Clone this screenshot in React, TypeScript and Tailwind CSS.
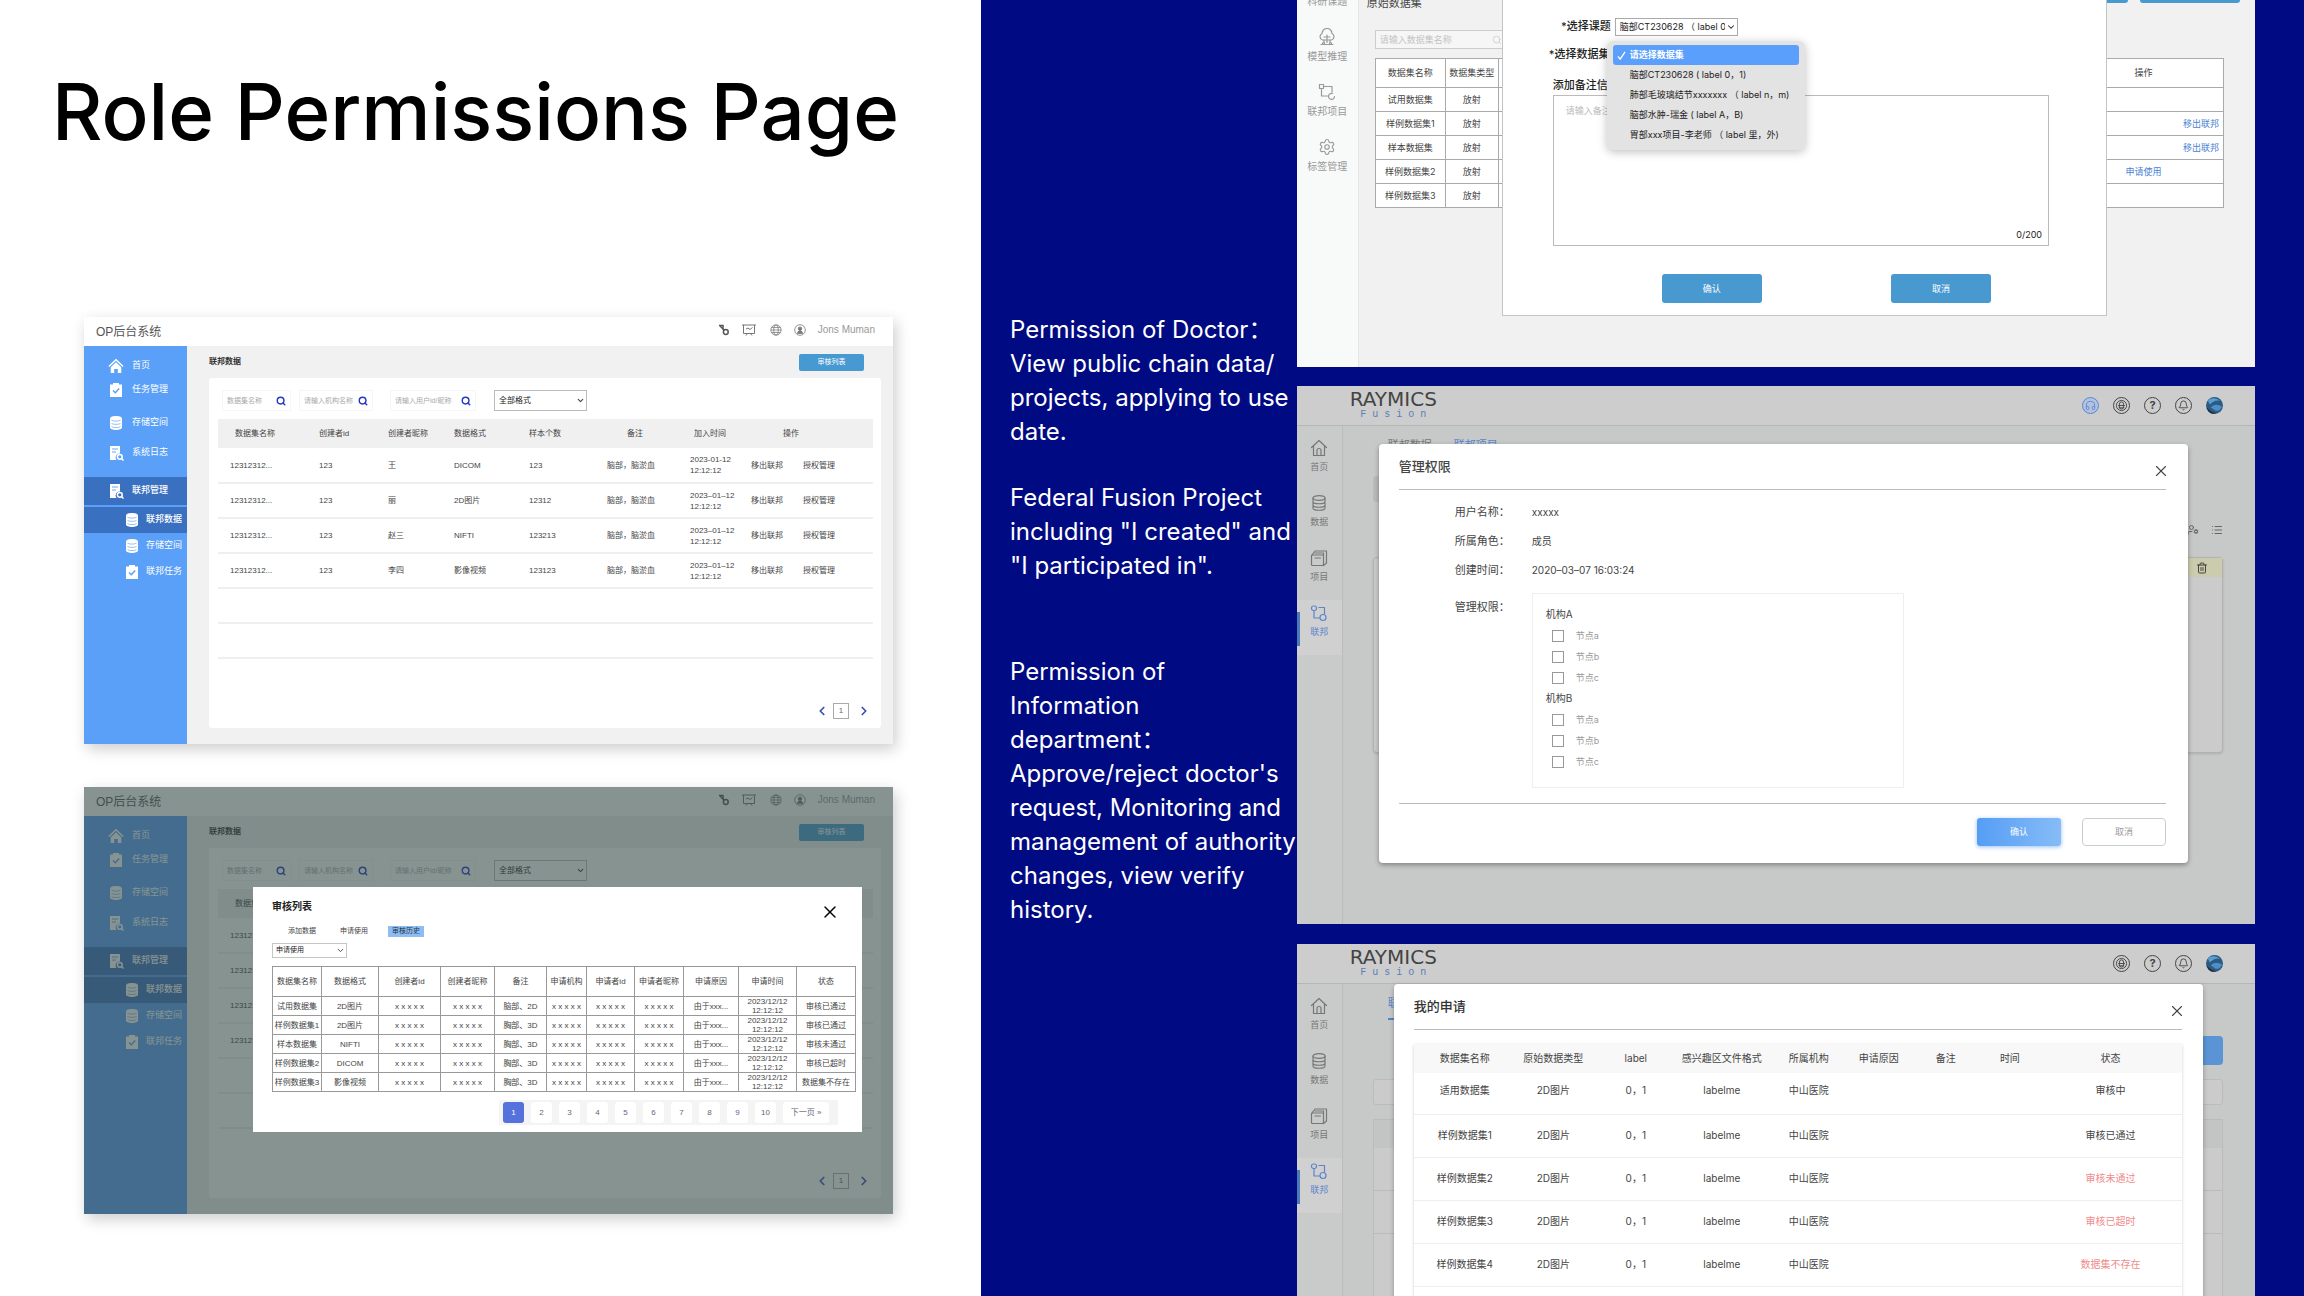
import React, { useId } from 'react';
import { Bell, ChevronDown, ChevronLeft, ChevronRight, Headphones, List, Search, Settings, Trash2, UserCog, X } from 'lucide-react';

const opMenu = [
    { label: '首页', icon: 'home' },
    { label: '任务管理', icon: 'task' },
];
const opMenuTall = [
    { label: '存储空间', icon: 'disk' },
    { label: '系统日志', icon: 'log' },
];
const opSubMenu = [
    { label: '联邦数据', icon: 'disk', active: true },
    { label: '存储空间', icon: 'disk', active: false },
    { label: '联邦任务', icon: 'task', active: false },
];

const opRows = [
    { name: '12312312...', id: '123', nick: '王', format: 'DICOM', count: '123', date: '2023-01-12' },
    { name: '12312312...', id: '123', nick: '丽', format: '2D图片', count: '12312', date: '2023–01–12' },
    { name: '12312312...', id: '123', nick: '赵三', format: 'NIFTI', count: '123213', date: '2023–01–12' },
    { name: '12312312...', id: '123', nick: '李四', format: '影像视频', count: '123123', date: '2023–01–12' },
];

const reviewHead = ['数据集名称', '数据格式', '创建者id', '创建者昵称', '备注', '申请机构', '申请者id', '申请者昵称', '申请原因', '申请时间', '状态'];
const reviewRows = [
    ['试用数据集', '2D图片', '脑部、2D', '审核已通过'],
    ['样例数据集1', '2D图片', '胸部、3D', '审核已通过'],
    ['样本数据集', 'NIFTI', '胸部、3D', '审核未通过'],
    ['样例数据集2', 'DICOM', '胸部、3D', '审核已超时'],
    ['样例数据集3', '影像视频', '胸部、3D', '数据集不存在'],
];

const datasetRows = [
    { name: '试用数据集', action: '', align: 'center' },
    { name: '样例数据集1', action: '移出联邦', align: 'right' },
    { name: '样本数据集', action: '移出联邦', align: 'right' },
    { name: '样例数据集2', action: '申请使用', align: 'center' },
    { name: '样例数据集3', action: '', align: 'center' },
];

const datasetOptions = [
    '请选择数据集',
    '脑部CT230628 ( label 0，1)',
    '肺部毛玻璃结节xxxxxxx （ label n，m)',
    '脑部水肿-瑞金 ( label A，B)',
    '胃部xxx项目-李老师 （ label 里，外)',
];

const applyHead = ['数据集名称', '原始数据类型', 'label', '感兴趣区文件格式', '所属机构', '申请原因', '备注', '时间', '状态'];
const applyRows = [
    { name: '适用数据集', status: '审核中', failed: false },
    { name: '样例数据集1', status: '审核已通过', failed: false },
    { name: '样例数据集2', status: '审核未通过', failed: true },
    { name: '样例数据集3', status: '审核已超时', failed: true },
    { name: '样例数据集4', status: '数据集不存在', failed: true },
];

/* Solid white icons of the OP sidebar */
const OpIcon: React.FC<{ name: string }> = ({ name }) => {
    if (name === 'home') {
        return (
            <svg viewBox="0 0 16 16" className="h-4 w-4 shrink-0" fill="currentColor">
                <path d="M8 .8 15.6 8l-1 1L8 2.8 1.400 9l-1-1z" />
                <path d="M8 4.200 13.300 9.200V15H9.800v-4H6.200v4H2.700V9.200z" />
            </svg>
        );
    }
    if (name === 'task') {
        return (
            <svg viewBox="0 0 16 16" className="h-4 w-4 shrink-0" fill="none">
                <path d="M2 2.500h3V1h6v1.500h3V15H2z" fill="currentColor" />
                <path d="m5 8.500 2.300 2.300L11.200 6.500" stroke="#5a9ff8" strokeWidth="1.400" />
            </svg>
        );
    }
    if (name === 'disk') {
        return (
            <svg viewBox="0 0 16 16" className="h-4 w-4 shrink-0" fill="none">
                <path d="M2 3.500C2 .2 14 .2 14 3.500v9c0 3.300-12 3.300-12 0z" fill="currentColor" />
                <path d="M3.500 5.200c2 1.200 7 1.200 9 0M3.500 8.500c2 1.200 7 1.200 9 0M3.500 11.700c2 1.200 7 1.200 9 0" stroke="#8fb8ee" strokeWidth=".9" />
            </svg>
        );
    }
    return (
        <svg viewBox="0 0 16 16" className="h-4 w-4 shrink-0" fill="none">
            <path d="M2 1h10v7.500A4 4 0 0 0 8.500 15H2z" fill="currentColor" />
            <path d="M4 4h6M4 7h4" stroke="#6ea6ec" strokeWidth="1" />
            <circle cx="11.800" cy="11.800" r="2.400" stroke="currentColor" strokeWidth="1.500" />
            <path d="m13.500 13.500 2 2" stroke="currentColor" strokeWidth="1.500" />
        </svg>
    );
};

/* Outline icons of the Raymics sidebar */
const RayIcon: React.FC<{ name: string }> = ({ name }) => (
    <svg viewBox="0 0 18 18" className="h-[18px] w-[18px]" fill="none" stroke="currentColor" strokeWidth="1.200" strokeLinejoin="round" strokeLinecap="round">
        {name === 'home' && (
            <>
                <path d="M1.500 8.500 9 1.500l7.500 7M3.500 7v9.500h11V7" />
                <path d="M7 16.500V11.500a2 2 0 0 1 4 0v5" />
            </>
        )}
        {name === 'data' && (
            <>
                <ellipse cx="9" cy="4" rx="6" ry="2.300" />
                <path d="M3 4v10c0 3 12 3 12 0V4M3 7.500c0 3 12 3 12 0M3 11c0 3 12 3 12 0" />
            </>
        )}
        {name === 'project' && (
            <>
                <rect x="1.500" y="6" width="12" height="10.500" rx="1" />
                <path d="M1.500 6.500 5 2h11.500v12l-3 2.500M5 9h5.500M5 4h8.500v2" />
            </>
        )}
        {name === 'federation' && (
            <>
                <rect x="1.500" y="2" width="5" height="4.500" rx="2" />
                <path d="M9 3.500h5.500V10M4 6.500v7.500h5.500" />
                <circle cx="13" cy="13.500" r="3" />
            </>
        )}
        {name === 'cloud' && (
            <>
                <path d="M4.500 12a3.500 3.500 0 0 1-.5-6.500 5 5 0 0 1 10 0 3.500 3.500 0 0 1-.5 6.500z" />
                <path d="M6 12v2.500M9 7v7.500M12 12v2.500M6 9h6" />
                <circle cx="5.500" cy="15.500" r="1" />
                <circle cx="12.500" cy="15.500" r="1" />
                <path d="M3 16.500h12" />
            </>
        )}
        {name === 'branch' && (
            <>
                <rect x="1.500" y="1.500" width="4" height="4" />
                <path d="M5.500 3.500h8.500V9M3.500 5.500V13h6" />
                <path d="M16.500 13.500a3 3 0 1 1-2-3" />
            </>
        )}
    </svg>
);

const SearchBox: React.FC<{ label: string; className: string }> = ({ label, className }) => (
    <div className={`flex h-[21px] items-center border border-[#f6f6f6] pl-1 pr-1 ${className}`}>
        <input aria-label={label} placeholder={label} className="min-w-0 flex-1 bg-transparent text-[7px] leading-[20px] outline-none placeholder:text-[#a9a9a9]" />
        <Search className="h-[10px] w-[10px] shrink-0 text-[#2438c8]" strokeWidth={3.5} />
    </div>
);

const OpConsole: React.FC<{ children?: React.ReactNode }> = ({ children }) => (
    <div className="relative h-[427px] bg-[#f1f1f1] font-['Liberation_Sans','Noto_Sans_CJK_SC',sans-serif] text-[8px] text-[#444] shadow-[3px_5px_14px_rgba(0,0,0,0.2)]">
        <header className="flex h-[29px] items-center bg-white pl-3 pr-[18px]">
            <span className="flex-1 text-[12px] text-[#555]">OP后台系统</span>
            <div className="flex items-center gap-3 pb-1 text-[#777]">
                <svg viewBox="0 0 12 12" className="h-3 w-3" fill="none" stroke="#555" strokeWidth="1.500">
                    <path d="M1 1.500h4v4" />
                    <path d="m2 2 4 4" />
                    <circle cx="7.800" cy="8" r="2.400" />
                </svg>
                <svg viewBox="0 0 14 12" className="h-3 w-[14px]" fill="none" stroke="currentColor" strokeWidth="1">
                    <path d="M0 1h14M1.500 1v8.500h11V1M4 11.500l1.500-2M10 11.500l-1.500-2M4 5l2-1 2 1.500 2.500-2" />
                </svg>
                <svg viewBox="0 0 14 14" className="ml-[2px] h-3 w-3" fill="none" stroke="currentColor" strokeWidth=".9">
                    <circle cx="7" cy="7" r="6" />
                    <ellipse cx="7" cy="7" rx="2.600" ry="6" />
                    <path d="M1 7h12M2 4h10M2 10h10" />
                </svg>
                <svg viewBox="0 0 14 14" className="h-3 w-3" fill="none" stroke="currentColor" strokeWidth=".9">
                    <circle cx="7" cy="7" r="6.200" />
                    <circle cx="7" cy="5.500" r="2" fill="currentColor" />
                    <path d="M4 11c0-4 6-4 6 0z" fill="currentColor" />
                </svg>
                <span className="text-[10px] text-[#999]">Jons Muman</span>
            </div>
        </header>

        <div className="flex h-[398px]">
            <nav className="w-[103px] shrink-0 bg-[#5a9ff8] pt-2 text-[9px] text-white">
                {opMenu.map(item => (
                    <a key={item.label} href="#" className="flex h-6 items-center gap-2 pl-6">
                        <OpIcon name={item.icon} />
                        {item.label}
                    </a>
                ))}
                <div className="mt-[6px]">
                    {opMenuTall.map(item => (
                        <a key={item.label} href="#" className="flex h-[30px] items-center gap-2 pl-6">
                            <OpIcon name={item.icon} />
                            {item.label}
                        </a>
                    ))}
                </div>
                <a href="#" className="mt-[9px] flex h-7 items-center gap-2 bg-[#3a70c0] pl-6 font-medium">
                    <OpIcon name="log" />
                    联邦管理
                </a>
                <div className="mt-[2px]">
                    {opSubMenu.map(item => (
                        <a key={item.label} href="#" className={`flex h-[26px] items-center gap-[6px] pl-10 ${item.active ? 'bg-[#3a70c0] font-medium' : ''}`}>
                            <OpIcon name={item.icon} />
                            <span className="whitespace-nowrap">{item.label}</span>
                        </a>
                    ))}
                </div>
            </nav>

            <main className="flex min-w-0 flex-1 flex-col pb-4 pl-[22px] pr-3">
                <div className="flex h-8 items-center justify-between pr-[17px]">
                    <h2 className="font-bold text-[#333]">联邦数据</h2>
                    <button className="h-[17px] w-[65px] rounded-[2px] bg-[#4799d2] text-[7px] text-white">审核列表</button>
                </div>
                <div className="flex flex-1 flex-col rounded-[3px] bg-white pl-[9px] pr-2 pt-3">
                    <div className="flex items-center pl-1">
                        <SearchBox label="数据集名称" className="w-[69px]" />
                        <SearchBox label="请输入机构名称" className="ml-2 w-[74px]" />
                        <SearchBox label="请输入用户id/昵称" className="ml-[17px] w-[86px]" />
                        <div className="relative ml-[18px]">
                            <select aria-label="数据格式" className="block h-[21px] w-[93px] appearance-none border border-[#bbb] bg-white pl-1 text-[8px] text-[#222]">
                                <option>全部格式</option>
                            </select>
                            <ChevronDown className="pointer-events-none absolute right-[2px] top-[6px] h-[9px] w-[9px]" strokeWidth={3} />
                        </div>
                    </div>

                    <table className="mt-2 w-full table-fixed border-collapse text-left leading-[11px]">
                        <colgroup>
                            <col className="w-[101px]" />
                            <col className="w-[69px]" />
                            <col className="w-[66px]" />
                            <col className="w-[75px]" />
                            <col className="w-[78px]" />
                            <col className="w-[83px]" />
                            <col className="w-[61px]" />
                            <col className="w-[122px]" />
                        </colgroup>
                        <thead>
                            <tr className="h-[29px] bg-[#f0f0f0]">
                                <th className="pl-[17px] font-normal">数据集名称</th>
                                <th className="font-normal">创建者id</th>
                                <th className="font-normal">创建者昵称</th>
                                <th className="font-normal">数据格式</th>
                                <th className="font-normal">样本个数</th>
                                <th className="pl-5 font-normal">备注</th>
                                <th className="pl-1 font-normal">加入时间</th>
                                <th className="pl-8 font-normal">操作</th>
                            </tr>
                        </thead>
                        <tbody>
                            {opRows.map((row, idx) => (
                                <tr key={idx} className="h-[35px] border-b-2 border-[#efefef]">
                                    <td className="pl-3">{row.name}</td>
                                    <td>{row.id}</td>
                                    <td>{row.nick}</td>
                                    <td>{row.format}</td>
                                    <td>{row.count}</td>
                                    <td>脑部，脑淤血</td>
                                    <td>{row.date}<br />12:12:12</td>
                                    <td>
                                        <a href="#" className="mr-5">移出联邦</a>
                                        <a href="#">授权管理</a>
                                    </td>
                                </tr>
                            ))}
                            <tr className="h-[35px] border-b-2 border-[#efefef]"><td colSpan={8}></td></tr>
                            <tr className="h-[35px] border-b-2 border-[#efefef]"><td colSpan={8}></td></tr>
                        </tbody>
                    </table>

                    <div className="mb-[9px] mr-[2px] mt-auto flex items-center justify-end gap-1 text-[#3553b5]">
                        <button aria-label="上一页"><ChevronLeft className="h-[14px] w-[14px]" strokeWidth={3} /></button>
                        <button className="h-4 w-4 border border-[#aaa] text-[8px] text-[#666]">1</button>
                        <button aria-label="下一页" className="ml-1"><ChevronRight className="h-[14px] w-[14px]" strokeWidth={3} /></button>
                    </div>
                </div>
            </main>
        </div>
        {children}
    </div>
);

const ReviewDialog: React.FC = () => (
    <div className="absolute inset-0 bg-[rgba(53,75,72,0.6)]">
        <div role="dialog" aria-label="审核列表" className="absolute left-[169px] right-[31px] top-[100px] h-[245px] bg-white pl-[19px] pr-[6px] pt-3">
            <div className="flex items-start justify-between pr-4">
                <h2 className="text-[10px] font-bold leading-[15px] text-[#222]">审核列表</h2>
                <button aria-label="关闭" className="mt-[3px]"><X className="h-5 w-5 text-black" strokeWidth={1.7} /></button>
            </div>
            <div className="mt-1 flex gap-4 pl-3 text-[7px]">
                <button className="h-[11px] w-9">添加数据</button>
                <button className="h-[11px] w-9">申请使用</button>
                <button className="h-[11px] w-9 bg-[#8ebdf5] text-[#234]">审核历史</button>
            </div>
            <div className="relative mt-[6px] w-[75px]">
                <select aria-label="申请类型" className="block h-[15px] w-full appearance-none border border-[#c5c5c5] bg-white pl-[3px] text-[7px] text-[#222]">
                    <option>申请使用</option>
                </select>
                <ChevronDown className="pointer-events-none absolute right-[2px] top-[3px] h-[9px] w-[9px]" strokeWidth={2.5} />
            </div>
            <table className="mt-2 w-full table-fixed border-collapse text-center leading-[9px]">
                <colgroup>
                    <col className="w-[49px]" />
                    <col className="w-[57px]" />
                    <col className="w-[62px]" />
                    <col className="w-[54px]" />
                    <col className="w-[52px]" />
                    <col className="w-[40px]" />
                    <col className="w-[48px]" />
                    <col className="w-[49px]" />
                    <col className="w-[55px]" />
                    <col className="w-[58px]" />
                    <col className="w-[59px]" />
                </colgroup>
                <thead>
                    <tr className="h-[30px]">
                        {reviewHead.map(h => <th key={h} className="border border-[#999] font-normal">{h}</th>)}
                    </tr>
                </thead>
                <tbody>
                    {reviewRows.map(([name, format, remark, status]) => (
                        <tr key={name} className="h-[19px] whitespace-nowrap">
                            <td className="border border-[#999]">{name}</td>
                            <td className="border border-[#999]">{format}</td>
                            <td className="border border-[#999]">x x x x x</td>
                            <td className="border border-[#999]">x x x x x</td>
                            <td className="border border-[#999]">{remark}</td>
                            <td className="border border-[#999]">x x x x x</td>
                            <td className="border border-[#999]">x x x x x</td>
                            <td className="border border-[#999]">x x x x x</td>
                            <td className="border border-[#999]">由于xxx...</td>
                            <td className="border border-[#999]">2023/12/12<br />12:12:12</td>
                            <td className="border border-[#999]">{status}</td>
                        </tr>
                    ))}
                </tbody>
            </table>
            <div className="ml-auto mr-[18px] mt-2 flex h-[25px] w-[339px] items-center gap-[7px] bg-[#f4f4f4] pl-1 text-[8px] text-[#667]">
                <button className="h-[21px] w-[21px] rounded-[3px] bg-[#5571dc] text-white">1</button>
                {[2, 3, 4, 5, 6, 7, 8, 9, 10].map(n => (
                    <button key={n} className="h-[21px] w-[21px] rounded-[3px] bg-white">{n}</button>
                ))}
                <button className="h-[21px] w-[46px] rounded-[3px] bg-white">下一页 »</button>
            </div>
        </div>
    </div>
);

const DatasetPanel: React.FC = () => {
    const id = useId();
    return (
        <section className="relative flex h-[367px] shrink-0 items-end overflow-hidden bg-[#f1f1f1] text-[9px] text-[#444]">
            {/* The page is taller than its frame, the top runs out of sight */}
            <div className="flex h-[394px] w-full shrink-0">
                <nav className="flex w-[61px] shrink-0 flex-col items-center bg-[#f8f9f9] text-[10px] leading-[14px] text-[#999]">
                    {[['data', '科研课题'], ['cloud', '模型推理'], ['branch', '联邦项目'], ['', '标签管理']].map(([icon, label]) => (
                        <a key={label} href="#" className="flex h-[55px] flex-col items-center gap-[3px]">
                            {icon ? <RayIcon name={icon} /> : <Settings className="h-[18px] w-[18px]" strokeWidth={1.5} />}
                            {label}
                        </a>
                    ))}
                </nav>
                <div className="min-w-0 flex-1 border-l border-[#e4e4e4] pl-4 pr-[31px] pt-[2px]">
                    <div className="-ml-2 flex h-[37px] items-start justify-between">
                        <h2 className="pt-5 text-[11px] leading-[16px]">原始数据集</h2>
                        <div className="-mr-4 flex gap-3">
                            <button aria-label="上传" className="h-7 w-[100px] rounded-[3px] bg-[#4799d0]"></button>
                            <button aria-label="新建" className="h-7 w-[100px] rounded-[3px] bg-[#4799d0]"></button>
                        </div>
                    </div>
                    <div className="mt-[18px] flex h-[19px] w-[140px] items-center justify-between border border-[#ccc] bg-[#f6f6f6] px-1">
                        <input aria-label="数据集名称" placeholder="请输入数据集名称" className="min-w-0 flex-1 bg-transparent outline-none placeholder:text-[#c4c4c4]" />
                        <Search className="mr-2 h-[10px] w-[10px] text-[#ccc]" />
                    </div>
                    <table className="mt-[9px] w-full table-fixed border-collapse bg-white text-center">
                        <colgroup>
                            <col className="w-[70px]" />
                            <col className="w-[53px]" />
                            <col />
                            <col className="w-[160px]" />
                        </colgroup>
                        <thead>
                            <tr className="h-[29px]">
                                <th className="border border-[#aaa] font-normal">数据集名称</th>
                                <th className="border border-[#aaa] font-normal">数据集类型</th>
                                <th className="border border-[#aaa]"></th>
                                <th className="border border-[#aaa] font-normal">操作</th>
                            </tr>
                        </thead>
                        <tbody>
                            {datasetRows.map(row => (
                                <tr key={row.name} className="h-6">
                                    <td className="border border-[#aaa]">{row.name}</td>
                                    <td className="border border-[#aaa]">放射</td>
                                    <td className="border border-[#aaa]"></td>
                                    <td className={`border border-[#aaa] text-[#4a82d4] ${row.align === 'right' ? 'pr-1 text-right' : ''}`}>
                                        {row.action && <a href="#">{row.action}</a>}
                                    </td>
                                </tr>
                            ))}
                        </tbody>
                    </table>
                </div>
            </div>

            <div role="dialog" aria-label="申请使用" className="absolute bottom-[51px] left-[205px] right-[148px] top-0 border border-t-0 border-[#c4c4c4] bg-white pl-[50px] pr-[57px] pt-[17px] text-[#222]">
                <div className="flex h-[19px] items-center gap-1">
                    <label htmlFor={`${id}-topic`} className="w-[58px] whitespace-nowrap text-right text-[11px] font-medium">*选择课题</label>
                    <div className="relative">
                        <select id={`${id}-topic`} className="block h-[18px] w-[123px] appearance-none border border-[#aaa] bg-white pl-1 pr-3 text-[9px]">
                            <option>脑部CT230628 （ label 0，1)</option>
                        </select>
                        <ChevronDown className="pointer-events-none absolute right-[2px] top-1 h-[10px] w-[10px]" strokeWidth={2.5} />
                    </div>
                </div>
                <div className="relative mt-[9px] flex h-[18px] items-center gap-1">
                    <label htmlFor={`${id}-set`} className="-ml-1 w-[62px] whitespace-nowrap text-[11px] font-medium">*选择数据集</label>
                    <select id={`${id}-set`} className="h-4 w-[123px] appearance-none border border-[#aaa] bg-white text-[9px]">
                        <option>{datasetOptions[0]}</option>
                    </select>
                    <ul role="listbox" aria-label="数据集" className="absolute -top-1 left-[54px] z-10 h-[109px] w-[198px] rounded-[6px] bg-[#e3e3e3] px-[6px] pt-1 shadow-[0_2px_10px_rgba(0,0,0,0.25)]">
                        {datasetOptions.map((option, idx) => (
                            <li
                                key={option}
                                role="option"
                                aria-selected={idx === 0}
                                className={`relative h-5 whitespace-nowrap rounded-[3px] pl-[17px] leading-[20px] ${idx === 0 ? 'bg-[#5a9ffb] font-bold text-white' : ''}`}
                            >
                                {idx === 0 && (
                                    <svg viewBox="0 0 10 10" className="absolute left-1 top-[6px] h-[9px] w-[9px]" fill="none" stroke="white" strokeWidth="1.500">
                                        <path d="m1 6 2.500 3L9 1" />
                                    </svg>
                                )}
                                {option}
                            </li>
                        ))}
                    </ul>
                </div>
                <label htmlFor={`${id}-note`} className="mt-[14px] block text-[11px] font-medium leading-[16px]">添加备注信息</label>
                <div className="relative mt-[2px] h-[151px] border border-[#bbb]">
                    <textarea id={`${id}-note`} placeholder="请输入备注信息" className="block h-full w-full resize-none px-3 py-2 text-[9px] outline-none placeholder:text-[#bbb]" />
                    <span className="absolute bottom-1 right-[6px] text-[9px]">0/200</span>
                </div>
                <div className="mt-7 flex justify-between pl-[109px] pr-[58px] text-[9px] text-white">
                    <button className="h-[29px] w-[100px] rounded-[3px] bg-[#4799d0]">确认</button>
                    <button className="h-[29px] w-[100px] rounded-[3px] bg-[#4799d0]">取消</button>
                </div>
            </div>
        </section>
    );
};

const rayMenu = [
    { label: '首页', icon: 'home' },
    { label: '数据', icon: 'data' },
    { label: '项目', icon: 'project' },
    { label: '联邦', icon: 'federation' },
];

const RoundIcon: React.FC<{ label: string; children: React.ReactNode; blue?: boolean }> = ({ label, children, blue }) => (
    <button aria-label={label} className={`flex h-[17px] w-[17px] items-center justify-center rounded-full border ${blue ? 'border-[#5c86d8] bg-[#b4c2dc] text-[#5c86d8]' : 'border-[#444] text-[#444]'}`}>
        {children}
    </button>
);

const RaymicsShell: React.FC<{ extra?: boolean; className: string; children: React.ReactNode }> = ({ extra, className, children }) => (
    <section className={`flex flex-col overflow-hidden bg-[#c6c9c8] text-[#444] ${className}`}>
        <header className="flex h-10 shrink-0 items-center justify-between border-b border-[#b4b7b7] bg-[#cdcdcd] pl-[34px] pr-8">
            <div className="flex w-[125px] flex-col items-center">
                <span className="font-['DejaVu_Sans',sans-serif] text-[20px] leading-[19px] text-[#444]">RAYMICS</span>
                <span className="font-['Liberation_Mono',monospace] text-[10px] leading-[12px] text-[#5c7fb8]">F u s i o n</span>
            </div>
            <div className="flex gap-[14px]">
                {extra && <RoundIcon label="客服" blue><Headphones className="h-[11px] w-[11px]" /></RoundIcon>}
                <RoundIcon label="语言">
                    <svg viewBox="0 0 14 14" className="h-[13px] w-[13px]" fill="none" stroke="currentColor" strokeWidth="1">
                        <circle cx="7" cy="7" r="5.500" />
                        <ellipse cx="7" cy="7" rx="2.500" ry="4" />
                        <path d="M3.500 7h7M4 9.500h6" />
                    </svg>
                </RoundIcon>
                <RoundIcon label="帮助"><span className="text-[11px] font-bold leading-none">?</span></RoundIcon>
                <RoundIcon label="通知"><Bell className="h-[11px] w-[11px]" /></RoundIcon>
                <svg viewBox="0 0 18 18" className="h-[17px] w-[17px]">
                    <circle cx="9" cy="9" r="9" fill="#2c5a82" />
                    <path d="M2 4c4-4 9-3 13 0-5-1-8 1-11 4z" fill="#5a9fd0" />
                    <path d="M5 11c4-4 8-3 12-1-2 5-6 6-9 3z" fill="#4b8fc6" />
                    <path d="M1 11c3 4 7 6 10 6-4 2-9 0-10-6z" fill="#222c38" />
                </svg>
            </div>
        </header>
        <div className="flex min-h-0 flex-1">
            <nav className="w-[46px] shrink-0 border-r border-[#b9bcbb] bg-[#c9cbca] pt-[9px] text-[9px] text-[#777]">
                {rayMenu.map(item => (
                    <a
                        key={item.label}
                        href="#"
                        className={`relative flex h-[55px] flex-col items-center gap-[3px] pt-1 leading-[14px] ${item.label === '联邦' ? 'bg-[#d0d0d0] text-[#5b86cc]' : ''}`}
                    >
                        {item.label === '联邦' && <span className="absolute left-0 top-3 h-[34px] w-[3px] bg-[#4a7ab8]"></span>}
                        <RayIcon name={item.icon} />
                        {item.label}
                    </a>
                ))}
            </nav>
            <div className="relative min-w-0 flex-1">{children}</div>
        </div>
    </section>
);

const FieldRow: React.FC<{ label: string; value: string }> = ({ label, value }) => (
    <div className="flex h-[29px] items-center">
        <dt className="w-[77px] whitespace-nowrap text-[11px]">{label}：</dt>
        <dd className="text-[10px]">{value}</dd>
    </div>
);

const PermissionPanel: React.FC = () => {
    const id = useId();
    return (
        <RaymicsShell extra className="h-[538px] shrink-0">
            <div className="flex gap-[22px] pl-[45px] pt-3 text-[11px] leading-[14px] text-[#777]">
                <a href="#">联邦数据</a>
                <a href="#" className="text-[#5b86cc]">联邦项目</a>
            </div>
            <div className="ml-[30px] mr-24 mt-6 h-[26px] rounded-[3px] bg-[#b9bcbb]"></div>
            <div className="mr-8 flex h-[55px] items-center justify-end gap-3 text-[#666]">
                <UserCog className="h-3 w-3" />
                <List className="h-3 w-3" />
            </div>
            <div className="ml-[30px] mr-8 h-[196px] rounded-[4px] border border-[#b2b2b2] bg-[#cbcbcb] shadow">
                <div className="ml-auto flex h-[19px] w-40 items-center justify-end bg-[#cbccae] pr-[14px]">
                    <Trash2 className="h-3 w-3" />
                </div>
            </div>

            <div role="dialog" aria-label="管理权限" className="absolute left-9 right-[67px] top-[18px] h-[419px] rounded-[4px] bg-white pl-5 pr-[22px] shadow-[0_2px_5px_rgba(0,0,0,0.35)]">
                <div className="flex h-[46px] items-center justify-between border-b border-[#bbb]">
                    <h2 className="text-[13px] font-medium">管理权限</h2>
                    <button aria-label="关闭"><X className="-mr-1 mt-2 h-[18px] w-[18px]" strokeWidth={1.5} /></button>
                </div>
                <dl className="pl-14 pt-2">
                    <FieldRow label="用户名称" value="xxxxx" />
                    <FieldRow label="所属角色" value="成员" />
                    <FieldRow label="创建时间" value="2020–03–07 16:03:24" />
                </dl>
                <div className="mt-2 flex pl-14">
                    <span className="w-[77px] shrink-0 pt-[6px] text-[11px] leading-[16px]">管理权限：</span>
                    <div className="h-[195px] w-[372px] border border-[#eee] pl-[13px] pt-[10px] text-[9px]">
                        {['机构A', '机构B'].map(org => (
                            <fieldset key={org}>
                                <legend className="h-[21px] text-[10px] leading-[21px]">{org}</legend>
                                {['节点a', '节点b', '节点c'].map(node => (
                                    <div key={node} className="flex h-[21px] items-center gap-3 pl-[6px] text-[#999]">
                                        <input type="checkbox" id={`${id}-${org}-${node}`} className="h-3 w-3 appearance-none border border-[#999]" />
                                        <label htmlFor={`${id}-${org}-${node}`}>{node}</label>
                                    </div>
                                ))}
                            </fieldset>
                        ))}
                    </div>
                </div>
                <div className="mt-[15px] flex justify-end gap-[21px] border-t border-[#bbb] pt-[14px] text-[9px]">
                    <button className="h-7 w-[84px] rounded-[3px] bg-linear-to-r from-[#559df5] to-[#86bcf6] text-white shadow-[0_1px_4px_rgba(80,150,240,0.6)]">确认</button>
                    <button className="h-7 w-[84px] rounded-[4px] border border-[#ccc] text-[#999]">取消</button>
                </div>
            </div>
        </RaymicsShell>
    );
};

const ApplicationPanel: React.FC = () => (
    <RaymicsShell className="min-h-0 flex-1">
        <div className="ml-[45px] mt-3 w-11 border-b-2 border-[#4f86cc] pb-2 text-[11px] leading-[14px] text-[#5b86cc]">联邦数据</div>
        <div className="mr-8 mt-4 flex justify-end">
            <button aria-label="新建" className="h-[29px] w-[84px] rounded-[4px] bg-[#5b94d4]"></button>
        </div>
        <div className="ml-[30px] mr-8 mt-[14px] h-[26px] rounded-[3px] border border-[#bbb] bg-[#cbcbcb]"></div>
        <div className="ml-[30px] mr-8 mt-[14px] h-[400px] border border-[#bbb] bg-[#cbcbcb]">
            <div className="h-7 bg-[#c3c5c4]"></div>
            <div className="h-[43px] border-b border-[#bbb]"></div>
            <div className="h-[43px] border-b border-[#bbb]"></div>
        </div>

        <div role="dialog" aria-label="我的申请" className="absolute left-[51px] right-[52px] top-0 h-[560px] rounded-t-[4px] bg-white pl-5 pr-[21px] shadow-[0_2px_5px_rgba(0,0,0,0.3)]">
            <div className="flex h-[46px] items-center justify-between border-b border-[#bbb]">
                <h2 className="text-[13px] font-medium text-[#333]">我的申请</h2>
                <button aria-label="关闭"><X className="-mr-1 mt-2 h-[18px] w-[18px]" strokeWidth={1.5} /></button>
            </div>
            <table className="mt-[14px] w-full table-fixed border-collapse text-center text-[10px] shadow-[0_1px_3px_rgba(0,0,0,0.2)]">
                <colgroup>
                    <col className="w-[102px]" />
                    <col className="w-[75px]" />
                    <col className="w-[90px]" />
                    <col className="w-[82px]" />
                    <col className="w-[92px]" />
                    <col className="w-[48px]" />
                    <col className="w-[86px]" />
                    <col className="w-[42px]" />
                    <col className="w-[151px]" />
                </colgroup>
                <thead>
                    <tr className="h-[29px] whitespace-nowrap bg-[#f8f8f8]">
                        {applyHead.map(h => <th key={h} className="font-normal last:pl-2">{h}</th>)}
                    </tr>
                </thead>
                <tbody>
                    {applyRows.map(row => (
                        <tr key={row.name} className="h-[43px] border-b border-[#eee] first:h-[41px] first:align-top first:leading-[34px]">
                            <td>{row.name}</td>
                            <td>2D图片</td>
                            <td>0，1</td>
                            <td>labelme</td>
                            <td>中山医院</td>
                            <td></td>
                            <td></td>
                            <td></td>
                            <td className={row.failed ? 'pl-2 text-[#f08c8c]' : 'pl-2'}>{row.status}</td>
                        </tr>
                    ))}
                    <tr className="h-[43px]"><td colSpan={9}></td></tr>
                </tbody>
            </table>
        </div>
    </RaymicsShell>
);

const App: React.FC = () => (
    <div className="grid h-screen grid-cols-[980fr_316fr_1008fr] overflow-hidden bg-[#000a82] font-['Inter','Noto_Sans_CJK_SC',sans-serif]">
        <section className="bg-white">
            <h1 className="whitespace-nowrap pl-[52px] pt-16 text-[78px] font-medium leading-[96px] text-black">Role Permissions Page</h1>
            <div className="mt-[157px] flex flex-col gap-[43px] pl-[84px] pr-[88px]">
                <OpConsole />
                <OpConsole>
                    <ReviewDialog />
                </OpConsole>
            </div>
        </section>

        <section className="pl-[29px] pt-[313px] text-[24px] leading-[34px] text-white">
            <p>Permission of Doctor：<br />View public chain data/<br />projects, applying to use<br />date.</p>
            <p className="mt-8">Federal Fusion Project<br />including "I created" and<br />"I participated in".</p>
            <p className="mt-[72px]">Permission of<br />Information<br />department：<br />Approve/reject doctor's<br />request, Monitoring and<br />management of authority<br />changes, view verify<br />history.</p>
        </section>

        <div className="flex h-screen flex-col pr-[49px]">
            <DatasetPanel />
            <div className="h-[19px] shrink-0"></div>
            <PermissionPanel />
            <div className="h-5 shrink-0"></div>
            <ApplicationPanel />
        </div>
    </div>
);

export default App;
